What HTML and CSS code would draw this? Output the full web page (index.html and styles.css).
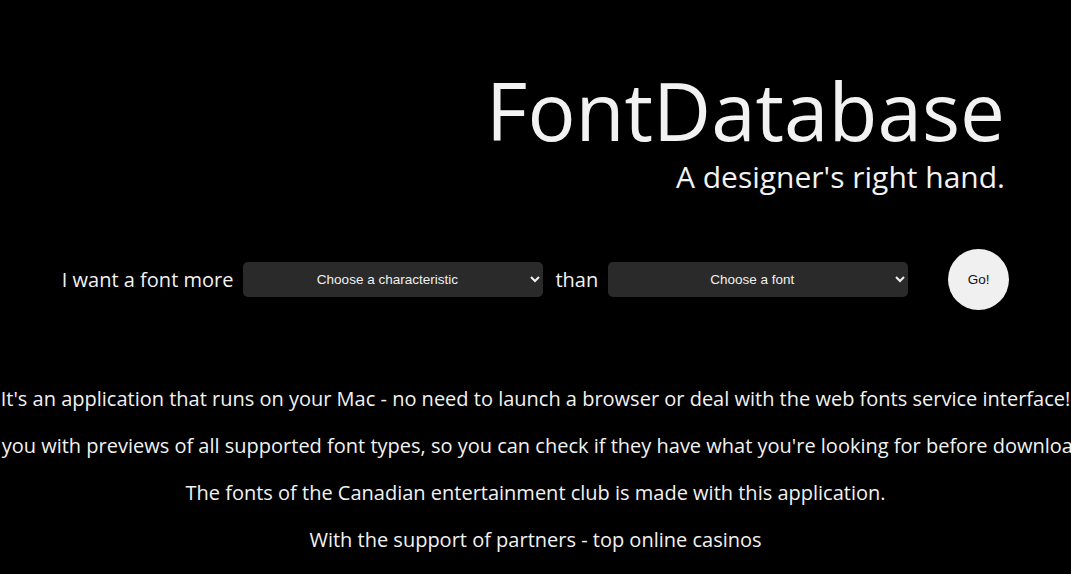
FILE: index.html
```html
<!DOCTYPE html>
<html lang="en">
<head>
  <meta charset="UTF-8" />
  <meta name="viewport" content="width=device-width, initial-scale=1.0"/>
  <title>FontDatabase</title>
  <link rel="stylesheet" href="styles.css">
</head>
<body>

  <header class="header">
    <h1 class="title">FontDatabase</h1>
    <p class="tagline">A designer's right hand.</p>
  </header>

  <form class="search">
    <label class="search-text" for="characteristic">I want a font more</label>
    <select class="picker" id="characteristic">
      <option>Choose a characteristic</option>
      <option>bold</option>
      <option>elegant</option>
      <option>playful</option>
    </select>
    <label class="search-text" for="font">than</label>
    <select class="picker" id="font">
      <option>Choose a font</option>
      <option>Arial</option>
      <option>Helvetica</option>
      <option>Times New Roman</option>
    </select>
    <button class="go" type="button">Go!</button>
  </form>

  <div class="about">
    <p>It's an application that runs on your Mac - no need to launch a browser or deal with the web fonts service interface!</p>
    <p>It provides you with previews of all supported font types, so you can check if they have what you're looking for before downloading them.</p>
    <p>The fonts of the Canadian entertainment club is made with this application.</p>
    <p>With the support of partners - top online casinos</p>
  </div>

</body>
</html>
```

FILE: styles.css
```css
* {
  margin: 0;
  padding: 0;
  box-sizing: border-box;
}
body {
  font-family: "Open Sans", Arial, sans-serif;
  background: #000;
  color: #f2f2f2;
  overflow: hidden;
}
.header {
  display: flex;
  flex-direction: column;
  align-items: flex-end;
  padding: 70px 66px 0 0;
}
.title {
  font-size: 80px;
  font-weight: 400;
  line-height: 1;
}
.tagline {
  font-size: 30px;
  line-height: 1;
  margin-top: 12px;
}
.search {
  display: flex;
  justify-content: center;
  align-items: center;
  margin-top: 57px;
}
.search-text {
  font-size: 20px;
  margin-right: 10px;
}
.picker {
  width: 300px;
  height: 35px;
  background: #2a2a2a;
  color: #f0f0f0;
  border: none;
  border-radius: 5px;
  font-family: "Liberation Sans", Arial, sans-serif;
  font-size: 13.5px;
  text-align: center;
  text-align-last: center;
  padding: 0 10px;
  margin-right: 12px;
}
#font {
  margin-right: 40px;
}
.go {
  width: 61px;
  height: 61px;
  border-radius: 50%;
  border: none;
  background: #f0f0f0;
  color: #111;
  font-family: "Liberation Sans", Arial, sans-serif;
  font-size: 13.5px;
}
.about {
  display: flex;
  flex-direction: column;
  align-items: center;
  margin-top: 75px;
}
.about p {
  font-size: 20px;
  line-height: 27px;
  white-space: nowrap;
  margin-bottom: 20px;
}
```
